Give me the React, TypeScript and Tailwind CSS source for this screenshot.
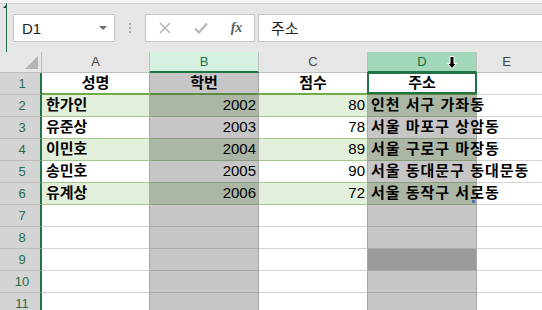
import React from "react";

type Row = {
  n: number;
  a?: string;
  b?: string;
  c?: string;
  d?: string;
  header?: boolean;
  band?: boolean;
  table?: boolean;
};

const rows: Row[] = [
  { n: 1, a: "성명", b: "학번", c: "점수", d: "주소", header: true, table: true },
  { n: 2, a: "한가인", b: "2002", c: "80", d: "인천 서구 가좌동", band: true, table: true },
  { n: 3, a: "유준상", b: "2003", c: "78", d: "서울 마포구 상암동", table: true },
  { n: 4, a: "이민호", b: "2004", c: "89", d: "서울 구로구 마장동", band: true, table: true },
  { n: 5, a: "송민호", b: "2005", c: "90", d: "서울 동대문구 동대문동", table: true },
  { n: 6, a: "유계상", b: "2006", c: "72", d: "서울 동작구 서로동", band: true, table: true },
  { n: 7 },
  { n: 8 },
  { n: 9 },
  { n: 10 },
  { n: 11 },
];

const font = "font-['Liberation_Sans','Noto_Sans_CJK_KR',sans-serif]";

function DownArrow() {
  return (
    <svg width="10" height="13" viewBox="0 0 10 13">
      <path d="M3 0.5h4v7h2.5L5 12.5 0.5 7.5H3z" fill="#000" stroke="#fff" strokeWidth="1" />
    </svg>
  );
}

export default function App() {
  return (
    <div className={`relative w-[542px] h-[310px] overflow-hidden bg-[#e6e6e6] ${font}`}>
      {/* top strip */}
      <div className="h-[3px] bg-[#f3f3f3] border-b border-[#d4d4d4] box-content" />
      {/* window left edge */}
      <div className="absolute left-[6px] top-[3px] w-px h-[49px] bg-[#217346]" />
      <div className="absolute left-[3px] top-[5px] w-0 h-0 border-l-[3px] border-l-transparent border-b-[3px] border-b-[#333]" />

      {/* formula bar */}
      <div className="flex items-stretch h-[48px] pt-[10px] pb-[10px]">
        <div className="ml-[13px] w-[102px] bg-white border border-[#c6c6c6] flex items-center justify-between pl-[8px] pr-[7px]">
          <span className="text-[15px] text-[#222] leading-none">D1</span>
          <span className="w-0 h-0 border-l-[4px] border-r-[4px] border-t-[4px] border-l-transparent border-r-transparent border-t-[#6d6d6d]" />
        </div>
        <div className="w-[30px] flex flex-col items-center justify-center gap-[2px]">
          <span className="w-[2px] h-[2px] bg-[#a8a8a8]" />
          <span className="w-[2px] h-[2px] bg-[#a8a8a8]" />
          <span className="w-[2px] h-[2px] bg-[#a8a8a8]" />
        </div>
        <div className="w-[110px] bg-white border border-[#c6c6c6] flex items-center">
          <div className="w-[37px] flex justify-center pl-[1px]">
            <svg width="12" height="12" viewBox="0 0 12 12">
              <path d="M1 1L11 11M11 1L1 11" stroke="#b0b0b0" strokeWidth="1.4" />
            </svg>
          </div>
          <div className="w-[36px] flex justify-center">
            <svg width="14" height="12" viewBox="0 0 14 12">
              <path d="M1 6.5L5 10.5L13 1.5" stroke="#b9b9b9" strokeWidth="2.4" fill="none" />
            </svg>
          </div>
          <div className="flex-1 flex justify-center">
            <span className="font-['Liberation_Serif',serif] italic font-bold text-[14px] text-[#5d5d5d] leading-none">
              fx
            </span>
          </div>
        </div>
        <div className="ml-[3px] flex-1 bg-white border border-[#c6c6c6] border-r-0 flex items-center pl-[12px]">
          <span className="text-[15px] text-[#222] leading-none">주소</span>
        </div>
      </div>

      {/* sheet */}
      <div className="bg-white">
        {/* column headers */}
        <div className="flex h-[21px] bg-[#e6e6e6]">
          <div className="w-[42px] shrink-0 border-r border-b border-[#bfbfbf] relative">
            <div className="absolute right-[3px] bottom-[3px] w-0 h-0 border-l-[13px] border-l-transparent border-b-[13px] border-b-[#b4b4b4]" />
          </div>
          <div className="w-[108px] shrink-0 border-r border-b border-[#bfbfbf] flex items-center justify-center text-[13px] text-[#444]">A</div>
          <div className="w-[109px] shrink-0 bg-[#d3f0e0] border-r border-r-[#bfbfbf] border-b-2 border-b-[#217346] flex items-center justify-center text-[13px] text-[#217346]">B</div>
          <div className="w-[109px] shrink-0 border-r border-b border-[#bfbfbf] flex items-center justify-center text-[13px] text-[#444]">C</div>
          <div className="relative w-[109px] shrink-0 bg-[#a0d8b9] border-r border-r-[#bfbfbf] border-b-2 border-b-[#217346] flex items-center justify-center text-[13px] text-[#1e6b45]">
            D
            <div className="absolute left-[79px] top-[4px]">
              <DownArrow />
            </div>
          </div>
          <div className="flex-1 border-b border-[#bfbfbf] flex items-center justify-center text-[13px] text-[#444] pr-[6px]">E</div>
        </div>

        {rows.map((r) => {
          const rowBorder = r.header
            ? "border-b-2 border-b-[#70ad47]"
            : r.table
            ? "border-b border-b-[#a3c98a]"
            : "border-b border-b-[#d4d4d4]";
          const selBorder = r.header
            ? "border-b-2 border-b-[#5f8a45]"
            : r.table
            ? "border-b border-b-[#8a9d7f]"
            : "border-b border-b-[#a9a9a9]";
          const plain = r.band ? "bg-[#e2efda]" : "bg-white";
          const sel = r.band ? "bg-[#abb7a4]" : "bg-[#c6c6c6]";
          return (
            <div key={r.n} className="flex h-[22px] text-[15px] text-black">
              <div className="w-[42px] shrink-0 bg-[#d4d4d4] border-r-2 border-r-[#217346] border-b border-b-[#bdbdbd] flex items-center justify-center pl-[4px] text-[13px] text-[#2a6b47]">
                {r.n}
              </div>
              {/* A */}
              <div className={`w-[108px] shrink-0 ${plain} ${rowBorder} border-r border-r-[#a6a6a6] flex items-center ${r.header ? "justify-center" : "pl-[4px]"} font-bold whitespace-nowrap`}>
                {r.a}
              </div>
              {/* B */}
              <div className={`w-[109px] shrink-0 ${sel} ${selBorder} border-r border-r-[#a6a6a6] flex items-center ${r.header ? "justify-center font-bold" : "justify-end pr-[2px]"} whitespace-nowrap`}>
                {r.b}
              </div>
              {/* C */}
              <div className={`w-[109px] shrink-0 ${plain} ${rowBorder} border-r border-r-[#a6a6a6] flex items-center ${r.header ? "justify-center font-bold" : "justify-end pr-[2px]"} whitespace-nowrap`}>
                {r.c}
              </div>
              {/* D */}
              <div
                className={`relative z-10 w-[109px] shrink-0 ${
                  r.header ? "bg-white" : r.n === 9 ? "bg-[#9b9b9b]" : sel
                } ${selBorder} border-r border-r-[#a6a6a6] flex items-center ${
                  r.header ? "justify-center" : "pl-[3px] tracking-[1px]"
                } font-bold whitespace-nowrap overflow-visible`}
              >
                {r.header && <div className="absolute -left-px -top-px right-[-1px] bottom-[-1px] border-2 border-[#217346]" />}
                <span className="relative">{r.d}</span>
                {r.n === 6 && <div className="absolute right-[1px] bottom-[1px] w-[3px] h-[3px] bg-[#4a6fa5]" />}
              </div>
              {/* E */}
              <div className="flex-1 border-b border-b-[#d4d4d4]" />
            </div>
          );
        })}
      </div>
    </div>
  );
}
